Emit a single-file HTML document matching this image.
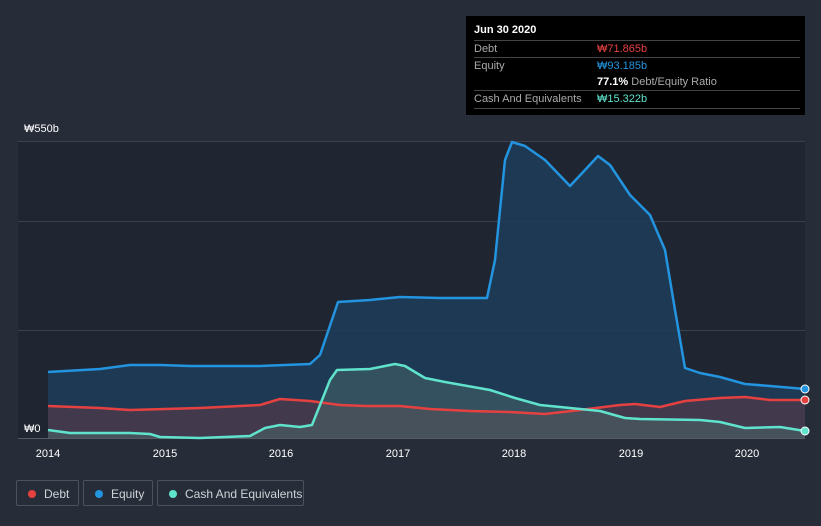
<!DOCTYPE html>
<html><head><meta charset="utf-8"><style>
body{margin:0;width:821px;height:526px;background:#262d38;font-family:"Liberation Sans","Noto Sans CJK KR",sans-serif;overflow:hidden;position:relative}
.tip{position:absolute;left:466px;top:16px;width:339px;height:99px;background:#000;color:#fff;font-size:11px}
.tip .r{position:absolute;left:8px;width:326px;border-top:1px solid #444}
.lg{position:absolute;top:480px;height:26px;border:1px solid #4a525e;border-radius:2px;color:#d0d3d8;font-size:12px;line-height:26px;box-sizing:border-box}
.lg i{position:absolute;left:11px;top:9px;width:8px;height:8px;border-radius:50%}
.lg span{position:absolute;left:27px}
</style></head><body>
<svg width="821" height="526" style="position:absolute;left:0;top:0">
<rect x="18" y="141" width="787" height="297" fill="#1f2631"/>
<g stroke="#3a414c" stroke-width="1"><line x1="18" y1="141.5" x2="805" y2="141.5"/><line x1="18" y1="221.5" x2="805" y2="221.5"/><line x1="18" y1="330.5" x2="805" y2="330.5"/><line x1="18" y1="438.5" x2="805" y2="438.5" stroke="#555c66"/></g>
<path d="M48,372 L100,369 L130,365 L160,365 L190,366 L260,366 L310,364 L320,355 L338,302 L370,300 L400,297 L440,298 L487,298 L495,260 L505,160 L512,142 L525,146 L545,160 L570,186 L585,170 L598,156 L610,165 L630,195 L650,215 L665,250 L675,310 L685,368 L700,373 L720,377 L745,384 L770,386 L805,389 L805,438 L48,438Z" fill="#1e3d5a" opacity="0.85"/>
<path d="M48,406 L100,408 L130,410 L165,409 L200,408 L260,405 L280,399 L310,401 L340,405 L365,406 L400,406 L430,409 L470,411 L510,412 L545,414 L580,410 L620,405 L635,404 L660,407 L685,401 L720,398 L745,397 L770,400 L805,400 L805,438 L48,438Z" fill="#5a3a4a" opacity="0.6"/>
<path d="M48,430 L70,433 L130,433 L150,434 L160,437 L200,438 L250,436 L265,428 L280,425 L300,427 L312,425 L330,380 L337,370 L370,369 L395,364 L405,366 L425,378 L445,382 L490,390 L515,398 L540,405 L570,408 L600,411 L625,418 L640,419 L700,420 L720,422 L745,428 L780,427 L805,431 L805,438 L48,438Z" fill="#4a6a6a" opacity="0.5"/>
<g fill="none" stroke-width="2.5" stroke-linejoin="round">
<path d="M48,372 L100,369 L130,365 L160,365 L190,366 L260,366 L310,364 L320,355 L338,302 L370,300 L400,297 L440,298 L487,298 L495,260 L505,160 L512,142 L525,146 L545,160 L570,186 L585,170 L598,156 L610,165 L630,195 L650,215 L665,250 L675,310 L685,368 L700,373 L720,377 L745,384 L770,386 L805,389" stroke="#2394df"/>
<path d="M48,406 L100,408 L130,410 L165,409 L200,408 L260,405 L280,399 L310,401 L340,405 L365,406 L400,406 L430,409 L470,411 L510,412 L545,414 L580,410 L620,405 L635,404 L660,407 L685,401 L720,398 L745,397 L770,400 L805,400" stroke="#e64141"/>
<path d="M48,430 L70,433 L130,433 L150,434 L160,437 L200,438 L250,436 L265,428 L280,425 L300,427 L312,425 L330,380 L337,370 L370,369 L395,364 L405,366 L425,378 L445,382 L490,390 L515,398 L540,405 L570,408 L600,411 L625,418 L640,419 L700,420 L720,422 L745,428 L780,427 L805,431" stroke="#5fe3cc"/>
</g>
<circle cx="805" cy="389" r="4" fill="#2394df" stroke="#fff"/>
<circle cx="805" cy="400" r="4" fill="#e64141" stroke="#fff"/>
<circle cx="805" cy="431" r="4" fill="#5fe3cc" stroke="#fff"/>
<g fill="#fff" font-size="11" font-family="Liberation Sans,Noto Sans CJK KR,sans-serif">
<text x="24" y="132">₩550b</text><text x="24" y="432">₩0</text>
<g text-anchor="middle"><text x="48" y="457">2014</text><text x="165" y="457">2015</text><text x="281" y="457">2016</text><text x="398" y="457">2017</text><text x="514" y="457">2018</text><text x="631" y="457">2019</text><text x="747" y="457">2020</text></g>
</g>
</svg>
<div class="tip">
<div style="position:absolute;left:8px;top:8px;font-weight:bold">Jun 30 2020</div>
<div class="r" style="top:24px;height:16px"><span style="position:absolute;left:0;top:2px;color:#aaa">Debt</span><span style="position:absolute;left:123px;top:2px;color:#e64141">₩71.865b</span></div>
<div class="r" style="top:41px;height:33px"><span style="position:absolute;left:0;top:2px;color:#aaa">Equity</span><span style="position:absolute;left:123px;top:2px;color:#2394df">₩93.185b</span><span style="position:absolute;left:123px;top:18px"><b>77.1%</b> <span style="color:#aaa">Debt/Equity Ratio</span></span></div>
<div class="r" style="top:74px;height:17px;border-bottom:1px solid #444"><span style="position:absolute;left:0;top:2px;color:#aaa">Cash And Equivalents</span><span style="position:absolute;left:123px;top:2px;color:#5fe3cc">₩15.322b</span></div>
</div>
<div class="lg" style="left:16px;width:63px"><i style="background:#e64141"></i><span>Debt</span></div>
<div class="lg" style="left:83px;width:70px"><i style="background:#2394df"></i><span>Equity</span></div>
<div class="lg" style="left:157px;width:147px"><i style="background:#5fe3cc"></i><span>Cash And Equivalents</span></div>
</body></html>
